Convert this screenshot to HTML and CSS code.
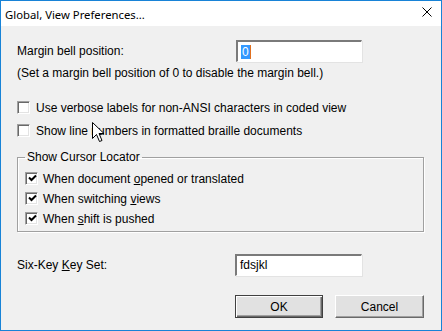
FILE: index.html
```html
<!DOCTYPE html>
<html lang="en">
<head>
    <meta charset="UTF-8">
    <title>Global, View Preferences...</title>
    <link rel="stylesheet" href="styles.css">
</head>
<body>
    <div class="dialog">
        <div class="title-bar">
            <span class="title-text">Global, View Preferences...</span>
            <svg class="close-icon" width="10" height="10" viewBox="0 0 10 10">
                <path d="M0.5 0.5 L9.5 9.5 M9.5 0.5 L0.5 9.5" stroke="#000" stroke-width="1"/>
            </svg>
        </div>

        <div class="content">
            <div class="field-row">
                <span class="label">Margin bell position:</span>
                <div class="text-input first"><span class="selected">0</span><span class="caret"></span></div>
            </div>
            <p class="hint">(Set a margin bell position of 0 to disable the margin bell.)</p>

            <div class="check-row top-check">
                <span class="check-box"></span>
                <span>Use verbose labels for non-ANSI characters in coded view</span>
            </div>
            <div class="check-row second-check">
                <span class="check-box"></span>
                <span>Show line numbers in formatted braille documents</span>
            </div>

            <fieldset class="group-box">
                <legend>Show Cursor Locator</legend>
                <div class="check-row">
                    <span class="check-box checked"><svg width="9" height="9" viewBox="0 0 9 9"><path d="M1 3.5 L3.5 6 L8 1.5" fill="none" stroke="#000" stroke-width="2"/></svg></span>
                    <span>When document <u>o</u>pened or translated</span>
                </div>
                <div class="check-row">
                    <span class="check-box checked"><svg width="9" height="9" viewBox="0 0 9 9"><path d="M1 3.5 L3.5 6 L8 1.5" fill="none" stroke="#000" stroke-width="2"/></svg></span>
                    <span>When switching <u>v</u>iews</span>
                </div>
                <div class="check-row">
                    <span class="check-box checked"><svg width="9" height="9" viewBox="0 0 9 9"><path d="M1 3.5 L3.5 6 L8 1.5" fill="none" stroke="#000" stroke-width="2"/></svg></span>
                    <span>When <u>s</u>hift is pushed</span>
                </div>
            </fieldset>

            <div class="field-row key-row">
                <span class="label">Six-Key <u>K</u>ey Set:</span>
                <div class="text-input">fdsjkl</div>
            </div>

            <div class="button-row">
                <button class="btn default-btn">OK</button>
                <button class="btn">Cancel</button>
            </div>
        </div>

        <svg class="mouse-cursor" width="13" height="21" viewBox="0 0 13 21">
            <path d="M0.5 0.5 L0.5 16.5 L4.5 12.5 L7.5 19.5 L10 18.5 L7 11.5 L12 11.5 Z" fill="#fff" stroke="#000" stroke-width="1"/>
        </svg>
    </div>
</body>
</html>
```

FILE: styles.css
```css
* {
    margin: 0;
    padding: 0;
    box-sizing: border-box;
}

body {
    background: #f0f0f0;
    font-family: 'Liberation Sans', Arial, sans-serif;
    font-size: 12px;
    color: #000;
}

.dialog {
    position: relative;
    width: 442px;
    height: 331px;
    border: 1px solid #1883d7;
    background: #f0f0f0;
}

.title-bar {
    height: 25px;
    background: #fff;
    display: flex;
    align-items: center;
    justify-content: space-between;
    padding: 0 9px 0 4px;
}

.title-text {
    font-family: 'Noto Sans', 'Open Sans', sans-serif;
    font-size: 11.3px;
    margin-top: 1px;
}

.close-icon {
    display: block;
    margin-top: -3px;
}

.content {
    padding: 14px 16px 0 16px;
}

.field-row {
    display: flex;
    align-items: center;
    height: 22px;
}

.label {
    width: 218px;
    line-height: 14px;
}

.text-input {
    width: 127px;
    height: 22px;
    background: #fff;
    border-style: solid;
    border-width: 2px 1px 1px 2px;
    border-color: #7a7a7a #fff #fff #7a7a7a;
    box-shadow: 1px 1px 0 #e3e3e3;
    padding: 2px 3px;
    line-height: 15px;
    display: flex;
    align-items: center;
}

.text-input.first {
    margin-left: 1px;
    width: 126px;
}

.selected {
    background: #3399ff;
    color: #fff;
    padding: 0 1px;
    line-height: 14px;
}

.caret {
    width: 1px;
    height: 14px;
    background: #e07020;
}

.hint {
    margin-top: 4px;
    line-height: 14px;
}

.check-row {
    display: flex;
    align-items: center;
    gap: 6px;
    height: 13px;
    line-height: 14px;
}

.top-check {
    margin-top: 21px;
}

.second-check {
    margin-top: 10px;
}

.check-box {
    width: 13px;
    height: 13px;
    flex: none;
    background: #fff;
    border-style: solid;
    border-width: 1px;
    border-color: #a0a0a0 #fff #fff #a0a0a0;
    box-shadow: inset 1px 1px 0 #696969, inset -1px -1px 0 #e3e3e3;
    display: flex;
    align-items: center;
    justify-content: center;
}

.check-box svg {
    display: block;
    margin-left: 1px;
}

.group-box {
    margin-top: 14px;
    width: 407px;
    border: 1px solid #a0a0a0;
    box-shadow: 1px 1px 0 #fff, inset 1px 1px 0 #fff;
    padding: 8px 8px 6px 7px;
    display: flex;
    flex-direction: column;
    gap: 7px;
}

.group-box .check-row {
    gap: 5px;
}

.group-box legend {
    padding: 0 2px;
    margin-left: 0;
    line-height: 13px;
}

.key-row {
    margin-top: 22px;
}

.button-row {
    display: flex;
    gap: 12px;
    margin-top: 19px;
    padding-left: 218px;
}

.btn {
    font-family: 'Liberation Sans', Arial, sans-serif;
    font-size: 12px;
    width: 89px;
    height: 23px;
    background: #e1e1e1;
    border-style: solid;
    border-width: 1px;
    border-color: #fff #696969 #696969 #fff;
    box-shadow: inset -1px -1px 0 #a0a0a0;
    color: #000;
}

.default-btn {
    width: 88px;
    border-color: #404040;
    box-shadow: inset 1px 1px 0 #fff, inset -1px -1px 0 #696969, inset -2px -2px 0 #a0a0a0;
}

.mouse-cursor {
    position: absolute;
    left: 91px;
    top: 121px;
}
```
